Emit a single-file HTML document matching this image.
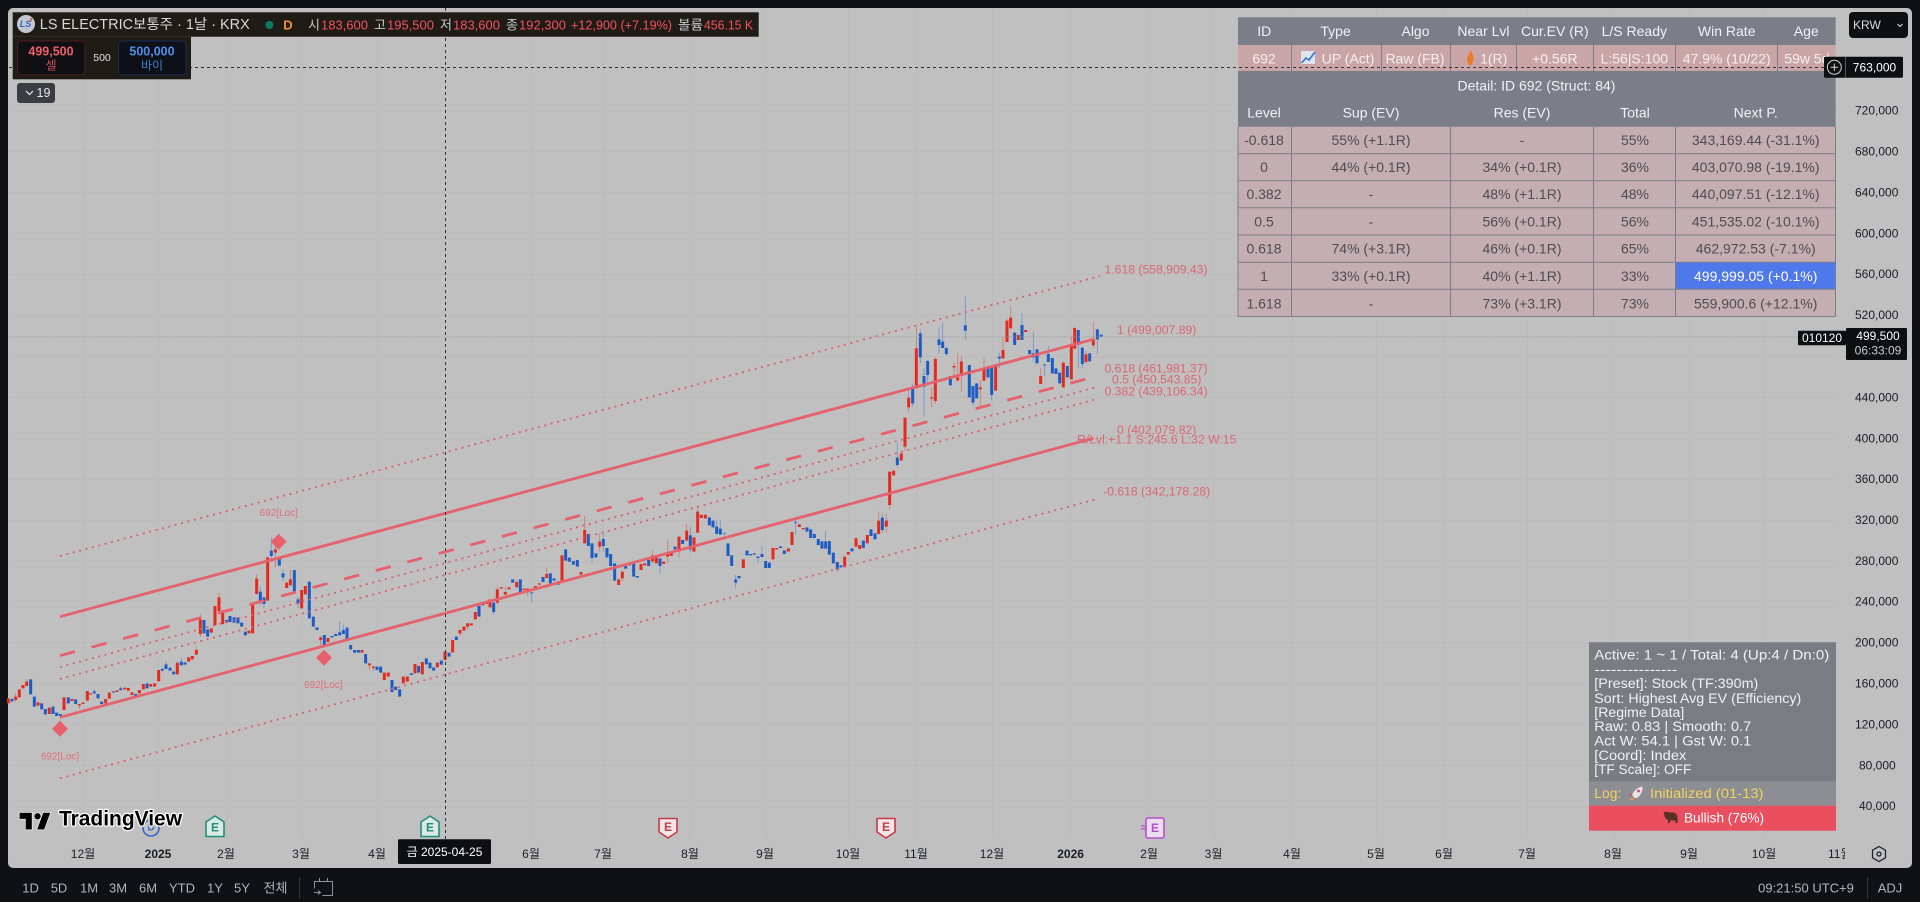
<!DOCTYPE html>
<html lang="ko"><head><meta charset="utf-8"><title>LS ELECTRIC</title>
<style>
html,body{margin:0;padding:0;background:#0f1114;width:1920px;height:902px;overflow:hidden}
svg{display:block}
text{font-family:"Liberation Sans","Noto Sans CJK KR",sans-serif;dominant-baseline:central}
.c{text-anchor:middle}
.th{font-size:14px;fill:#f2f2f4;text-anchor:middle}
.td{font-size:14px;fill:#4c4d55;text-anchor:middle}
.r1{font-size:14px;fill:#f6efef;text-anchor:middle}
.p{font-size:12px;fill:#1c1d22}
.t{font-size:12px;fill:#1c1d22;text-anchor:middle}
.l{font-size:12.2px;fill:#dc6671;text-anchor:middle}
.o{font-size:13px;fill:#f7525f}
.k{font-size:13px;fill:#c8cad0}
.m{font-size:13.5px;fill:#f1f1f3}
.b{font-size:13px;fill:#b2b5be;text-anchor:middle}
</style></head><body>
<svg width="1920" height="902" viewBox="0 0 1920 902" xmlns="http://www.w3.org/2000/svg">
<rect width="1920" height="902" fill="#0f1114"/>
<rect x="8" y="8" width="1904" height="860" rx="5" fill="#c0c0c0"/>
<!-- grid -->
<path stroke="#bbbbbb" stroke-width="1" fill="none" d="M9 110.5H1838M9 151.5H1838M9 192.5H1838M9 233.5H1838M9 274.5H1838M9 315.5H1838M9 356.5H1838M9 397.5H1838M9 438.5H1838M9 479.5H1838M9 520.5H1838M9 561.5H1838M9 601.5H1838M9 642.5H1838M9 683.5H1838M9 724.5H1838M9 765.5H1838M9 806.5H1838M83.5 8V838M158.5 8V838M226.5 8V838M301.5 8V838M377.5 8V838M531.5 8V838M603.5 8V838M690.5 8V838M765.5 8V838M848.5 8V838M916.5 8V838M992.5 8V838M1070.5 8V838M1149.5 8V838M1213.5 8V838M1292.5 8V838M1376.5 8V838M1444.5 8V838M1527.5 8V838M1613.5 8V838M1689.5 8V838M1764.5 8V838"/>
<!-- candles left -->
<g transform="translate(0,480) scale(.33333)" fill="none">
<path stroke="#e0504a" stroke-width="2.5" opacity=".8" d="M657 340V393M770 283V296M601 403V470M589 500V510M871 270V298M826 180V262M668 390V435M962 470V495M1108 550V568M1120 556V572M238 672V686M1380 448V465M1403 428V448M80 598V605M47 640V665"/>
<path stroke="#5b8fd4" stroke-width="2.5" opacity=".85" d="M814 172V240M781 320V376M792 352V385M849 268V303M894 350V385M1019 425V457M1030 435V450M283 628V634M498 545V553M544 533V545M487 562V575M362 618V633M36 652V668"/>
<path stroke="#e32a1f" stroke-width="9" d="M25 655V670M47 650V660M58 628V652M69 615V625M80 605V618M114 667V677M148 683V702M192 652V690M216 657V663M238 672V676M249 668V672M262 633V662M272 640V644M317 657V670M328 638V656M351 631V636M374 623V628M385 624V632M396 637V645M418 630V640M430 612V628M452 612V620M464 610V620M476 570V604M532 548V583M566 532V545M577 528V538M589 510V524M601 418V462M634 445V458M645 378V436M657 352V393M668 395V432M747 452V460M758 372V460M770 296V342M803 232V362M826 208V218M860 308V324M871 298V316M905 330V385M916 318V343M962 472V480M984 474V486M1086 510V518M1108 550V556M1120 560V564M1153 578V600M1165 578V590M1210 590V610M1222 590V605M1245 552V580M1267 546V583M1312 548V562M1335 515V540M1358 480V517M1380 450V460M1392 440V452M1403 430V440M1414 430V436M1426 396V418"/>
<path stroke="#1c5cc4" stroke-width="9" d="M36 657V664M92 598V643M103 650V680M125 670V688M136 687V703M159 680V702M170 698V708M181 702V708M205 652V670M227 658V672M283 634V640M294 642V655M305 665V672M340 634V638M362 625V630M407 642V650M441 610V625M487 567V572M498 553V567M510 563V572M521 575V583M544 545V556M555 547V554M612 420V460M623 448V470M680 420V428M690 408V426M702 412V428M714 412V430M725 428V440M736 455V466M781 335V366M792 352V372M814 212V228M838 230V257M849 280V292M883 270V334M894 358V370M928 305V415M940 410V440M951 442V450M973 465V497M996 468V472M1007 462V468M1019 457V466M1030 450V462M1041 443V480M1052 495V508M1064 510V518M1075 510V518M1097 522V550M1131 560V570M1142 560V578M1176 600V636M1187 620V630M1199 628V650M1234 580V585M1256 558V578M1279 535V553M1290 548V565M1301 562V572M1324 542V554M1347 518V530M1369 470V480M1437 378V410"/>
</g>
<!-- candles mid -->
<g transform="translate(480,480) scale(.33333)" fill="none">
<path stroke="#d9685f" stroke-width="2.5" opacity=".8" d="M314 108V190M359 160V215M427 275V305M518 210V250M563 180V250M597 170V232M620 132V182M653 80V158M1196 95V162M1219 100V158M1128 172V200M200 262V294M110 300V322M52 322V372M76 320V344M143 326V348"/>
<path stroke="#5b8fd4" stroke-width="2.5" opacity=".85" d="M155 340V368M767 285V325M947 125V165M1207 100V158M1037 152V206M721 122V164M710 118V162M733 158V180M336 190V250M540 235V282M370 160V215M631 140V218M1072 246V276M41 368V402M846 198V231M834 230V248"/>
<path stroke="#e32a1f" stroke-width="9" d="M19 364V372M30 358V382M52 328V368M64 322V326M76 336V344M87 322V328M110 306V322M132 326V330M143 326V332M166 318V330M178 310V314M200 282V294M246 226V308M303 276V284M314 150V190M359 185V200M416 298V315M427 275V295M449 250V256M483 252V270M494 250V256M518 226V244M529 232V250M551 245V252M563 218V230M574 220V228M597 170V215M620 152V182M642 172V215M653 95V158M664 104V114M676 104V115M790 238V264M879 204V238M890 204V208M925 205V215M936 156V195M958 133V141M970 144V148M1094 230V260M1105 216V224M1128 175V200M1139 195V207M1162 165V190M1196 122V162M1219 122V140"/>
<path stroke="#1c5cc4" stroke-width="9" d="M8 367V376M41 368V396M98 298V308M121 298V342M155 337V340M189 291V306M211 280V310M222 295V302M235 304V314M257 208V242M268 233V245M280 243V254M292 240V260M325 162V198M336 190V234M348 220V232M370 177V198M381 204V232M392 222V258M404 250V302M437 258V266M461 246V290M472 288V293M506 240V258M540 235V258M585 200V208M608 180V192M631 166V208M688 112V136M699 122V142M710 140V162M721 146V164M733 160V162M744 190V228M755 226V258M767 298V308M777 288V295M801 212V226M812 222V226M823 220V224M834 230V234M846 222V231M857 243V264M868 248V264M902 199V204M913 211V222M947 125V128M981 142V155M992 148V174M1003 162V174M1015 177V195M1026 184V206M1037 184V206M1048 183V224M1060 218V250M1072 246V268M1083 256V262M1116 205V214M1150 182V204M1173 148V168M1185 160V178M1207 113V150"/>
</g>
<!-- candles right -->
<g transform="translate(880,280) scale(.33333)" fill="none">
<path stroke="#d9685f" stroke-width="2.5" opacity=".8" d="M29 575V690M75 413V512M86 325V398M109 140V325M155 322V382M166 230V372M222 248V290M233 220V302M244 228V335M301 300V388M312 232V302M369 172V235M392 78V145M381 115V186M482 265V312M574 170V298M584 140V206M640 128V205M618 212V250"/>
<path stroke="#5b8fd4" stroke-width="2.5" opacity=".85" d="M52 490V560M98 310V380M121 148V250M132 265V410M143 240V310M177 140V220M188 128V204M199 200V228M256 48V178M279 318V378M335 258V360M358 218V265M426 100V180M460 155V245M494 253V290M505 198V246M607 203V265M595 150V265M652 148V222"/>
<path stroke="#e32a1f" stroke-width="9" d="M29 575V675M41 572V586M64 520V542M75 413V500M86 353V382M109 205V325M155 352V356M166 237V363M222 258V262M233 292V302M244 244V288M301 322V328M312 265V302M347 254V332M369 210V235M381 122V186M392 113V145M415 165V180M437 150V156M482 288V312M550 248V322M574 192V298M584 144V206M618 223V246M640 178V196"/>
<path stroke="#1c5cc4" stroke-width="9" d="M52 533V555M98 325V370M121 160V232M132 288V320M143 243V285M177 178V195M188 185V204M199 204V222M211 288V316M256 136V152M268 255V352M279 318V368M290 310V355M324 260V292M335 258V345M358 230V236M404 158V195M426 135V180M449 210V222M460 220V232M471 208V250M494 253V256M505 222V246M517 234V280M528 265V282M539 278V310M562 258V292M595 150V194M607 203V252M629 220V244M652 148V178M664 164V170"/>
</g>
<!-- channel lines -->
<g fill="none" stroke="#e5626d">
<path stroke-width="2.8" d="M60 616.7L1093.3 339.3"/>
<path stroke-width="2.8" d="M60 717.3L1093.3 438.3"/>
<path stroke-width="2.8" stroke-dasharray="15.5 17.2" d="M60 655.7L1086 379"/>
<path stroke-width="1.8" stroke-dasharray="2 4.6" stroke="#d9606c" d="M60 667L1097 387"/>
<path stroke-width="1.8" stroke-dasharray="2 4.6" stroke="#d9606c" d="M60 679L1097 399"/>
<path stroke-width="1.8" stroke-dasharray="2 4.6" stroke="#d9606c" d="M60 556L1100 276"/>
<path stroke-width="1.8" stroke-dasharray="2 4.6" stroke="#d9606c" d="M60 778.3L1097 499"/>
</g>
<path fill="#e8606c" d="M60 720.7L68 728.7L60 736.7L52 728.7ZM278.7 533.7L286.7 541.7L278.7 549.7L270.7 541.7ZM324 649.7L332 657.7L324 665.7L316 657.7Z"/>
<text class="c" x="60" y="757" fill="#df6d78" font-size="10">692[Loc]</text>
<text class="c" x="278.7" y="513.5" fill="#df6d78" font-size="10">692[Loc]</text>
<text class="c" x="323.3" y="685.7" fill="#df6d78" font-size="10">692[Loc]</text>
<text class="l" x="1156" y="269.4">1.618 (558,909.43)</text>
<text class="l" x="1156.7" y="330">1 (499,007.89)</text>
<text class="l" x="1156" y="368.7">0.618 (461,981.37)</text>
<text class="l" x="1156.7" y="379.7">0.5 (450,543.85)</text>
<text class="l" x="1156" y="391.3">0.382 (439,106.34)</text>
<text class="l" x="1156.7" y="430">0 (402,079.82)</text>
<text class="l" x="1156.7" y="439.3">R/Lvl:+1.1 S:245.6 L:32 W:15</text>
<text class="l" x="1156.7" y="491.7">-0.618 (342,178.28)</text>
<!-- current price line -->
<path d="M9 337H1798" stroke="#9a9a9a" stroke-width="1" stroke-dasharray="1 1.5"/>
<!-- table -->
<rect x="1238" y="17.3" width="597.6" height="299.4" fill="#c4aeb1"/>
<rect x="1238" y="17.3" width="597.6" height="27.7" fill="#7b7e89"/>
<rect x="1238" y="45" width="597.6" height="26" fill="#c9a5a8"/>
<rect x="1238" y="71" width="597.6" height="55.7" fill="#7b7e89"/>
<rect x="1676" y="262.3" width="159.6" height="27" fill="#4f78ea"/>
<path stroke="#7b7e89" stroke-width="1" fill="none" d="M1291.5 45V71M1381.5 45V71M1450.5 45V71M1516.5 45V71M1593.5 45V71M1675.5 45V71M1777.5 45V71M1238 153.7H1835.6M1238 180.7H1835.6M1238 207.7H1835.6M1238 235H1835.6M1238 262.3H1835.6M1238 289.3H1835.6M1238 316.5H1835.6M1291.5 126.7V316.7M1450.5 126.7V316.7M1593.5 126.7V316.7M1675.5 126.7V316.7M1238 126.7V316.7M1835.5 126.7V316.7"/>
<text class="th" x="1264.2" y="31">ID</text><text class="th" x="1335.6" y="31">Type</text><text class="th" x="1415.5" y="31">Algo</text><text class="th" x="1483.4" y="31">Near Lvl</text><text class="th" x="1554.8" y="31">Cur.EV (R)</text><text class="th" x="1634.3" y="31">L/S Ready</text><text class="th" x="1726.7" y="31">Win Rate</text><text class="th" x="1806.2" y="31">Age</text>
<text class="r1" x="1264" y="58.3">692</text>
<rect x="1301" y="51" width="14" height="13" fill="#dfe3ec"/><path d="M1301.5 63L1306 58L1309 60L1315 52" stroke="#2f74d0" stroke-width="1.6" fill="none"/>
<text class="r1" x="1348" y="58.3">UP (Act)</text>
<text class="r1" x="1415" y="58.3">Raw (FB)</text>
<path d="M1470.5 50.5C1473 54 1474 57 1473.3 60C1472.7 63 1471.5 65 1470.3 66C1468.7 64.5 1467 62 1467 59C1467.2 56.5 1469.5 54.5 1470.5 50.5Z" fill="#ea7a2c"/>
<text class="r1" x="1493.7" y="58.3">1(R)</text>
<text class="r1" x="1554.8" y="58.3">+0.56R</text><text class="r1" x="1634.3" y="58.3">L:56|S:100</text><text class="r1" x="1726.7" y="58.3">47.9% (10/22)</text><text class="r1" x="1784.3" y="58.3" style="text-anchor:start">59w 5d</text>
<text class="th" x="1536.5" y="85.3">Detail: ID 692 (Struct: 84)</text>
<text class="th" x="1264" y="112.7">Level</text><text class="th" x="1371" y="112.7">Sup (EV)</text><text class="th" x="1522" y="112.7">Res (EV)</text><text class="th" x="1635" y="112.7">Total</text><text class="th" x="1755.7" y="112.7">Next P.</text>
<text class="td" x="1264" y="140">-0.618</text><text class="td" x="1371" y="140">55% (+1.1R)</text><text class="td" x="1522" y="140">-</text><text class="td" x="1635" y="140">55%</text><text class="td" x="1755.7" y="140">343,169.44 (-31.1%)</text>
<text class="td" x="1264" y="167">0</text><text class="td" x="1371" y="167">44% (+0.1R)</text><text class="td" x="1522" y="167">34% (+0.1R)</text><text class="td" x="1635" y="167">36%</text><text class="td" x="1755.7" y="167">403,070.98 (-19.1%)</text>
<text class="td" x="1264" y="194">0.382</text><text class="td" x="1371" y="194">-</text><text class="td" x="1522" y="194">48% (+1.1R)</text><text class="td" x="1635" y="194">48%</text><text class="td" x="1755.7" y="194">440,097.51 (-12.1%)</text>
<text class="td" x="1264" y="221.5">0.5</text><text class="td" x="1371" y="221.5">-</text><text class="td" x="1522" y="221.5">56% (+0.1R)</text><text class="td" x="1635" y="221.5">56%</text><text class="td" x="1755.7" y="221.5">451,535.02 (-10.1%)</text>
<text class="td" x="1264" y="248.7">0.618</text><text class="td" x="1371" y="248.7">74% (+3.1R)</text><text class="td" x="1522" y="248.7">46% (+0.1R)</text><text class="td" x="1635" y="248.7">65%</text><text class="td" x="1755.7" y="248.7">462,972.53 (-7.1%)</text>
<text class="td" x="1264" y="276">1</text><text class="td" x="1371" y="276">33% (+0.1R)</text><text class="td" x="1522" y="276">40% (+1.1R)</text><text class="td" x="1635" y="276">33%</text><text class="r1" x="1755.7" y="276" style="fill:#fff">499,999.05 (+0.1%)</text>
<text class="td" x="1264" y="303.3">1.618</text><text class="td" x="1371" y="303.3">-</text><text class="td" x="1522" y="303.3">73% (+3.1R)</text><text class="td" x="1635" y="303.3">73%</text><text class="td" x="1755.7" y="303.3">559,900.6 (+12.1%)</text>
<!-- crosshair -->
<path d="M445.5 8V839" stroke="#333" stroke-width="1" stroke-dasharray="3 3"/>
<path d="M9 67.5H1824" stroke="#333" stroke-width="1" stroke-dasharray="3 3"/>
<!-- price axis -->
<text class="p" x="1855" y="110.7">720,000</text><text class="p" x="1855" y="151.7">680,000</text><text class="p" x="1855" y="192.3">640,000</text><text class="p" x="1855" y="233.3">600,000</text><text class="p" x="1855" y="274">560,000</text><text class="p" x="1855" y="315">520,000</text><text class="p" x="1855" y="397.5">440,000</text><text class="p" x="1855" y="438.3">400,000</text><text class="p" x="1855" y="479">360,000</text><text class="p" x="1855" y="520">320,000</text><text class="p" x="1855" y="560.8">280,000</text><text class="p" x="1855" y="601.5">240,000</text><text class="p" x="1855" y="642.7">200,000</text><text class="p" x="1855" y="683.3">160,000</text><text class="p" x="1855" y="724.3">120,000</text><text class="p" x="1859" y="765.3">80,000</text><text class="p" x="1859" y="806">40,000</text>
<!-- KRW -->
<rect x="1849" y="12" width="59" height="26" rx="4" fill="#0e0f11"/>
<text x="1853" y="25" font-size="12" fill="#d8d9de">KRW</text>
<path d="M1897.5 24L1900 26.5L1902.5 24" stroke="#c9cad0" stroke-width="1.2" fill="none"/>
<!-- price boxes -->
<rect x="1824" y="56.7" width="79" height="21" rx="1.5" fill="#0e0f11"/>
<path d="M1845.5 57V77.5" stroke="#55575c"/>
<circle cx="1834.3" cy="67.3" r="7" fill="none" stroke="#d0d1d6" stroke-width="1"/><path d="M1830.5 67.3H1838M1834.3 63.5V71" stroke="#d0d1d6"/>
<text x="1874.5" y="67.3" font-size="12" fill="#fff" class="c">763,000</text>
<rect x="1798" y="330.7" width="48" height="14.6" rx="1" fill="#0e0f11"/>
<rect x="1846" y="328" width="61" height="32" rx="1" fill="#0e0f11"/>
<text x="1822" y="338" font-size="12" fill="#fff" class="c">010120</text>
<text x="1878" y="336" font-size="12" fill="#fff" class="c">499,500</text>
<text x="1878" y="350.7" font-size="12" fill="#c9cad0" class="c">06:33:09</text>
<!-- info panel -->
<rect x="1589" y="642.3" width="247" height="139.4" fill="#7a7c84"/>
<rect x="1589" y="781.7" width="247" height="24" fill="#8c8e93"/>
<rect x="1589" y="805.7" width="247" height="25" fill="#ea4f5f"/>
<text class="m" x="1594.3" y="655" textLength="235" lengthAdjust="spacingAndGlyphs">Active: 1 ~ 1 / Total: 4 (Up:4 / Dn:0)</text>
<text class="m" x="1594.3" y="669.3" textLength="83" lengthAdjust="spacingAndGlyphs">---------------</text>
<text class="m" x="1594.3" y="683.3" textLength="164" lengthAdjust="spacingAndGlyphs">[Preset]: Stock (TF:390m)</text>
<text class="m" x="1594.3" y="698.3" textLength="207" lengthAdjust="spacingAndGlyphs">Sort: Highest Avg EV (Efficiency)</text>
<text class="m" x="1594.3" y="712.3" textLength="90" lengthAdjust="spacingAndGlyphs">[Regime Data]</text>
<text class="m" x="1594.3" y="726.7" textLength="157" lengthAdjust="spacingAndGlyphs">Raw: 0.83 | Smooth: 0.7</text>
<text class="m" x="1594.3" y="741" textLength="157" lengthAdjust="spacingAndGlyphs">Act W: 54.1 | Gst W: 0.1</text>
<text class="m" x="1594.3" y="755.3" textLength="92" lengthAdjust="spacingAndGlyphs">[Coord]: Index</text>
<text class="m" x="1594.3" y="769.3" textLength="97" lengthAdjust="spacingAndGlyphs">[TF Scale]: OFF</text>
<text x="1594.3" y="793.3" font-size="13.5" fill="#f2d35b" textLength="27" lengthAdjust="spacingAndGlyphs">Log:</text>
<path d="M1642.5 786.5C1638.5 787 1634 790 1632 795L1635.5 798.5C1640.5 796.5 1642.8 791.5 1642.5 786.5Z" fill="#e9e4ea"/><circle cx="1638.5" cy="791" r="1.4" fill="#d9455c"/><path d="M1632 795L1628.5 796L1631 793ZM1635.5 798.5L1634.5 801L1637.5 797.5Z" fill="#d9455c"/><path d="M1632.5 797.5L1629 800.5L1634 799.5Z" fill="#f0a030"/>
<text x="1650" y="793.3" font-size="13.5" fill="#f2d35b" textLength="113.5" lengthAdjust="spacingAndGlyphs">Initialized (01-13)</text>
<path d="M1663.5 812.5C1665 811 1668 812.5 1672 812.5C1675 812.5 1677.5 814 1677.5 818V823H1675.5V820.5H1670V823H1668V820C1666 819.5 1664.5 817.5 1664.5 815.5Z" fill="#5a3026"/>
<text x="1724" y="817.7" font-size="14" fill="#fff" class="c" textLength="80" lengthAdjust="spacingAndGlyphs">Bullish (76%)</text>
<!-- dividend marker under logo -->
<circle cx="151" cy="828" r="8" fill="#c0c0c0" stroke="#3465c8" stroke-width="1.6"/>
<text x="151" y="828" font-size="10" font-weight="700" fill="#3465c8" class="c">D</text>
<!-- logo -->
<g transform="translate(19.5 811) scale(.88)" fill="#000" stroke="#fff" stroke-width="1.4" paint-order="stroke">
<path d="M14 2H0v7h7v12h7Z"/><circle cx="20.5" cy="6" r="3.6"/><path d="M28 21h-8l7-19h8Z"/>
</g>
<text x="59" y="819" font-size="21" font-weight="700" fill="#000" stroke="#fff" stroke-width="2.4" paint-order="stroke" stroke-linejoin="round" textLength="123" lengthAdjust="spacingAndGlyphs">TradingView</text>
<!-- earnings -->
<g stroke-width="1.6" stroke-linejoin="round">
<path d="M206 836.5V822L215 816L224 822V836.5Z" fill="#dbe8e3" stroke="#1f8f7a"/>
<path d="M421 836.5V822L430 816L439 822V836.5Z" fill="#dbe8e3" stroke="#1f8f7a"/>
<path d="M659 818.5H677V832L668 838L659 832Z" fill="#f3e6e7" stroke="#c63a4a"/>
<path d="M877 818.5H895V832L886 838L877 832Z" fill="#f3e6e7" stroke="#c63a4a"/>
<rect x="1146" y="818" width="18" height="20" rx="2" fill="#ecdcf0" stroke="#b54fd0"/>
</g>
<path d="M1141 826.5q2-1.5 4 0M1141 829.5q2-1.5 4 0" stroke="#b54fd0" stroke-width="1.2" fill="none"/>
<text x="215" y="827.5" font-size="12" font-weight="700" fill="#1f8f7a" class="c">E</text>
<text x="430" y="827.5" font-size="12" font-weight="700" fill="#1f8f7a" class="c">E</text>
<text x="668" y="827" font-size="12" font-weight="700" fill="#c63a4a" class="c">E</text>
<text x="886" y="827" font-size="12" font-weight="700" fill="#c63a4a" class="c">E</text>
<text x="1155" y="828" font-size="12" font-weight="700" fill="#b54fd0" class="c">E</text>
<!-- time axis -->
<text class="t" x="83" y="854">12월</text><text class="t" x="158" y="854" font-weight="700">2025</text><text class="t" x="226" y="854">2월</text><text class="t" x="301" y="854">3월</text><text class="t" x="377" y="854">4월</text><text class="t" x="531" y="854">6월</text><text class="t" x="603" y="854">7월</text><text class="t" x="690" y="854">8월</text><text class="t" x="765" y="854">9월</text><text class="t" x="848" y="854">10월</text><text class="t" x="916" y="854">11월</text><text class="t" x="992" y="854">12월</text><text class="t" x="1070.6" y="854" font-weight="700">2026</text><text class="t" x="1149" y="854">2월</text><text class="t" x="1213.5" y="854">3월</text><text class="t" x="1292" y="854">4월</text><text class="t" x="1376" y="854">5월</text><text class="t" x="1444" y="854">6월</text><text class="t" x="1527" y="854">7월</text><text class="t" x="1613" y="854">8월</text><text class="t" x="1689" y="854">9월</text><text class="t" x="1764" y="854">10월</text>
<text class="t" x="1828" y="854" style="text-anchor:start">11월</text>
<rect x="1845" y="842" width="20" height="22" fill="#c0c0c0"/>
<path d="M1879 846.5L1885.5 850.2V857.8L1879 861.5L1872.5 857.8V850.2Z" fill="none" stroke="#1c1d22" stroke-width="1.2"/><circle cx="1879" cy="854" r="2" fill="none" stroke="#1c1d22" stroke-width="1.2"/>
<rect x="398" y="839.3" width="93" height="24.7" rx="1.5" fill="#0e0f11"/>
<text x="444.5" y="852" font-size="12" fill="#fff" class="c">금 2025-04-25</text>
<!-- legend -->
<rect x="12.7" y="12.3" width="746" height="24.4" fill="#1f1b15"/>
<rect x="12.7" y="36.7" width="178.3" height="42.6" fill="#1f1b15"/>
<circle cx="26" cy="24" r="9" fill="#c5c7ce"/>
<text x="25.5" y="24" font-size="9" font-weight="700" font-style="italic" fill="#2e66c4" class="c">LS</text>
<path d="M30 19L33 17L31 22Z" fill="#e0503c"/>
<text x="39.8" y="25" font-size="14.3" fill="#d6d8de" textLength="210" lengthAdjust="spacingAndGlyphs">LS ELECTRIC보통주 · 1날 · KRX</text>
<circle cx="269.4" cy="25" r="4" fill="#0d7a66"/>
<text x="288" y="25" font-size="13" font-weight="700" fill="#f0932a" class="c">D</text>
<text class="k" x="308" y="25">시</text><text class="o" x="321" y="25">183,600</text>
<text class="k" x="374" y="25">고</text><text class="o" x="387" y="25">195,500</text>
<text class="k" x="440" y="25">저</text><text class="o" x="453" y="25">183,600</text>
<text class="k" x="506" y="25">종</text><text class="o" x="519" y="25">192,300</text>
<text class="o" x="571" y="25" textLength="101" lengthAdjust="spacingAndGlyphs">+12,900 (+7.19%)</text>
<text class="k" x="678" y="25" textLength="25" lengthAdjust="spacingAndGlyphs">볼륨</text><text class="o" x="704" y="25" textLength="49" lengthAdjust="spacingAndGlyphs">456.15 K</text>
<rect x="17.5" y="41" width="67.5" height="34" rx="4" fill="#101013" stroke="#4e1c22"/>
<rect x="118.5" y="41" width="67.5" height="34" rx="4" fill="#0d1016" stroke="#1a2c55"/>
<text x="51" y="51.7" font-size="12.5" font-weight="700" fill="#ee5f6c" class="c">499,500</text>
<text x="51" y="65.7" font-size="12" fill="#d6505c" class="c">셀</text>
<text x="102" y="58" font-size="10.5" fill="#e3e4e8" class="c">500</text>
<text x="152" y="51.7" font-size="12.5" font-weight="700" fill="#4f92ee" class="c">500,000</text>
<text x="152" y="65.7" font-size="12" fill="#3d7cd2" class="c">바이</text>
<rect x="17" y="83" width="38" height="20" rx="3" fill="#3a3d42"/>
<path d="M26 91L29.5 94.5L33 91" stroke="#e8e9ed" stroke-width="1.2" fill="none"/>
<text x="43.5" y="93" font-size="12.5" fill="#e8e9ed" class="c">19</text>
<!-- bottom bar -->
<text class="b" x="30.6" y="888">1D</text><text class="b" x="59" y="888">5D</text><text class="b" x="89" y="888">1M</text><text class="b" x="118" y="888">3M</text><text class="b" x="148" y="888">6M</text><text class="b" x="182" y="888">YTD</text><text class="b" x="215" y="888">1Y</text><text class="b" x="242" y="888">5Y</text><text class="b" x="275.5" y="888">전체</text>
<path d="M299.5 877V899" stroke="#34363b"/>
<path d="M319.5 878V882M327.5 878V882M314.5 888.5V881.5H332.5V895.5H322.5M314 892.5H320.5M318 890.5L320.5 892.5L318 894.5" stroke="#8f929b" stroke-width="1" fill="none"/>
<text x="1806" y="888" font-size="13" fill="#b2b5be" class="c">09:21:50 UTC+9</text>
<path d="M1867.5 877V899" stroke="#34363b"/>
<text x="1890" y="888" font-size="13" fill="#b2b5be" class="c">ADJ</text>
</svg>
</body></html>
